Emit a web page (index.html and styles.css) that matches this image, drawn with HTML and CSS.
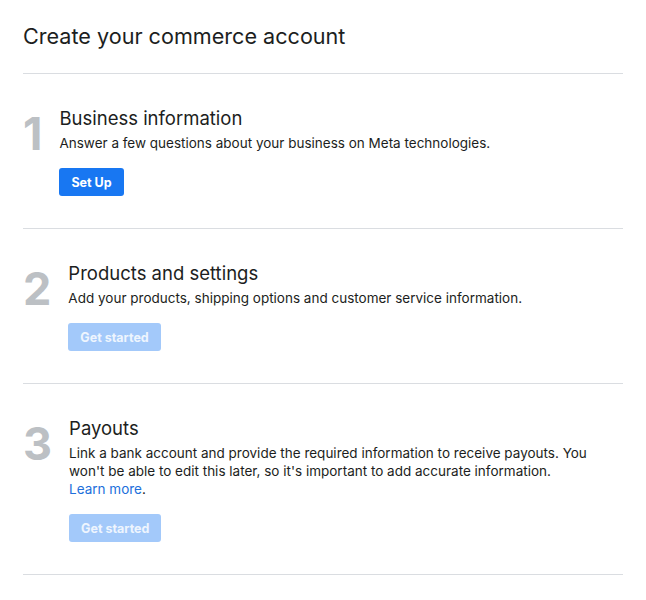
FILE: index.html
```html
<!DOCTYPE html>
<html>
<head>
<meta charset="utf-8">
<link rel="stylesheet" href="styles.css">
</head>
<body>
<div class="page">
  <h1 class="heading">Create your commerce account</h1>
  <div class="step">
    <div class="num">1</div>
    <div class="body">
      <div class="title">Business information</div>
      <div class="desc">Answer a few questions about your business on Meta technologies.</div>
      <button class="btn primary">Set Up</button>
    </div>
  </div>
  <div class="step">
    <div class="num">2</div>
    <div class="body">
      <div class="title">Products and settings</div>
      <div class="desc">Add your products, shipping options and customer service information.</div>
      <button class="btn disabled">Get started</button>
    </div>
  </div>
  <div class="step">
    <div class="num">3</div>
    <div class="body">
      <div class="title">Payouts</div>
      <div class="desc">Link a bank account and provide the required information to receive payouts. You won't be able to edit this later, so it's important to add accurate information. <a class="link" href="#">Learn more</a>.</div>
      <button class="btn disabled">Get started</button>
    </div>
  </div>
</div>
</body>
</html>
```
FILE: styles.css
```css
* { box-sizing: border-box; }
body {
  margin: 0;
  background: #fff;
  font-family: Inter, "Liberation Sans", sans-serif;
  color: #1c1e21;
}
.page {
  width: 600px;
  margin-left: 23px;
}
.heading {
  margin: 0;
  padding: 22px 0 23px;
  font-size: 21.6px;
  line-height: 28px;
  font-weight: 400;
  border-bottom: 1px solid #dadde1;
}
.step {
  display: flex;
  padding: 32px 0 32px;
  border-bottom: 1px solid #dadde1;
}
.num {
  font-size: 45px;
  font-weight: 700;
  line-height: 44px;
  color: #bcc0c4;
  margin-right: 17px;
  margin-top: 6px;
}
.body {
  flex: 1;
  max-width: 520px;
}
.title {
  font-size: 18.5px;
  line-height: 24px;
}
.desc {
  margin-top: 4px;
  font-size: 13.5px;
  line-height: 18px;
}
.link { color: #216fdb; text-decoration: none; }
.btn {
  display: block;
  margin-top: 16px;
  height: 28px;
  padding: 0 12px;
  border: 0;
  border-radius: 3px;
  font-family: inherit;
  font-size: 12.5px;
  font-weight: 700;
  color: #fff;
}
.primary { background: #1877f2; }
.disabled { background: #a3c9fa; color: #eef5fe; }
```
